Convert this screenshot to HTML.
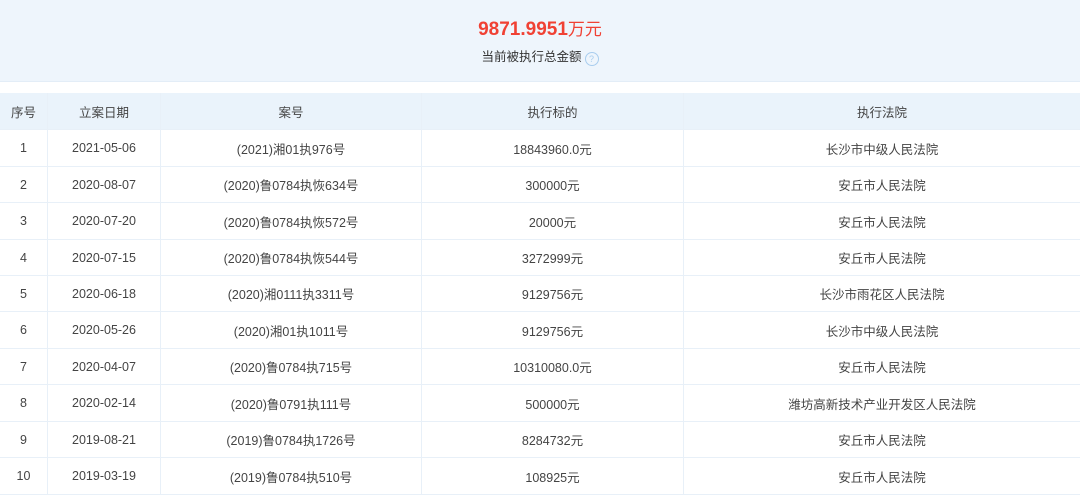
<!DOCTYPE html><html><head><meta charset="utf-8"><style>
body{margin:0;width:1080px;height:491px;overflow:hidden;background:#fff;font-family:"Liberation Sans","Noto Sans CJK SC",sans-serif;color:#444;font-size:12.5px}
.top{position:absolute;left:0;top:0;width:1080px;height:81px;background:#eef5fc;border-bottom:1px solid #e3edf7}
.amt{position:absolute;top:15px;width:100%;text-align:center;color:#f04134;font-size:19px;font-weight:bold}
.amt span{font-weight:normal;font-size:17px}
.lbl{position:absolute;top:46px;width:100%;text-align:center;font-size:12.5px;color:#333}
.q{display:inline-block;width:12px;height:12px;border:1px solid #a9cdee;border-radius:50%;color:#a9cdee;font-size:9px;line-height:12px;text-align:center;vertical-align:-1px;margin-left:3px}
.row{position:absolute;left:0;width:1080px;border-bottom:1px solid #e8f0f8;box-sizing:border-box;display:flex}
.row div{border-right:1px solid #e8f0f8;box-sizing:border-box;text-align:center;display:flex;align-items:center;justify-content:center;height:100%}
.h{background:#eaf3fb}
.c1{width:48px}.c2{width:113px}.c3{width:261px}.c4{width:262px}.c5{width:396px;border-right:none!important}
</style></head><body>
<div class="top"><div class="amt">9871.9951<span>万元</span></div><div class="lbl">当前被执行总金额<span class="q">?</span></div></div>
<div class="row h" style="top:93px;height:37px"><div class="c1">序号</div><div class="c2">立案日期</div><div class="c3">案号</div><div class="c4">执行标的</div><div class="c5">执行法院</div></div>
<div class="row" style="top:130px;height:37px"><div class="c1">1</div><div class="c2">2021-05-06</div><div class="c3">(2021)湘01执976号</div><div class="c4">18843960.0元</div><div class="c5">长沙市中级人民法院</div></div>
<div class="row" style="top:167px;height:36px"><div class="c1">2</div><div class="c2">2020-08-07</div><div class="c3">(2020)鲁0784执恢634号</div><div class="c4">300000元</div><div class="c5">安丘市人民法院</div></div>
<div class="row" style="top:203px;height:37px"><div class="c1">3</div><div class="c2">2020-07-20</div><div class="c3">(2020)鲁0784执恢572号</div><div class="c4">20000元</div><div class="c5">安丘市人民法院</div></div>
<div class="row" style="top:240px;height:36px"><div class="c1">4</div><div class="c2">2020-07-15</div><div class="c3">(2020)鲁0784执恢544号</div><div class="c4">3272999元</div><div class="c5">安丘市人民法院</div></div>
<div class="row" style="top:276px;height:36px"><div class="c1">5</div><div class="c2">2020-06-18</div><div class="c3">(2020)湘0111执3311号</div><div class="c4">9129756元</div><div class="c5">长沙市雨花区人民法院</div></div>
<div class="row" style="top:312px;height:37px"><div class="c1">6</div><div class="c2">2020-05-26</div><div class="c3">(2020)湘01执1011号</div><div class="c4">9129756元</div><div class="c5">长沙市中级人民法院</div></div>
<div class="row" style="top:349px;height:36px"><div class="c1">7</div><div class="c2">2020-04-07</div><div class="c3">(2020)鲁0784执715号</div><div class="c4">10310080.0元</div><div class="c5">安丘市人民法院</div></div>
<div class="row" style="top:385px;height:37px"><div class="c1">8</div><div class="c2">2020-02-14</div><div class="c3">(2020)鲁0791执111号</div><div class="c4">500000元</div><div class="c5">潍坊高新技术产业开发区人民法院</div></div>
<div class="row" style="top:422px;height:36px"><div class="c1">9</div><div class="c2">2019-08-21</div><div class="c3">(2019)鲁0784执1726号</div><div class="c4">8284732元</div><div class="c5">安丘市人民法院</div></div>
<div class="row" style="top:458px;height:37px"><div class="c1">10</div><div class="c2">2019-03-19</div><div class="c3">(2019)鲁0784执510号</div><div class="c4">108925元</div><div class="c5">安丘市人民法院</div></div>
</body></html>
